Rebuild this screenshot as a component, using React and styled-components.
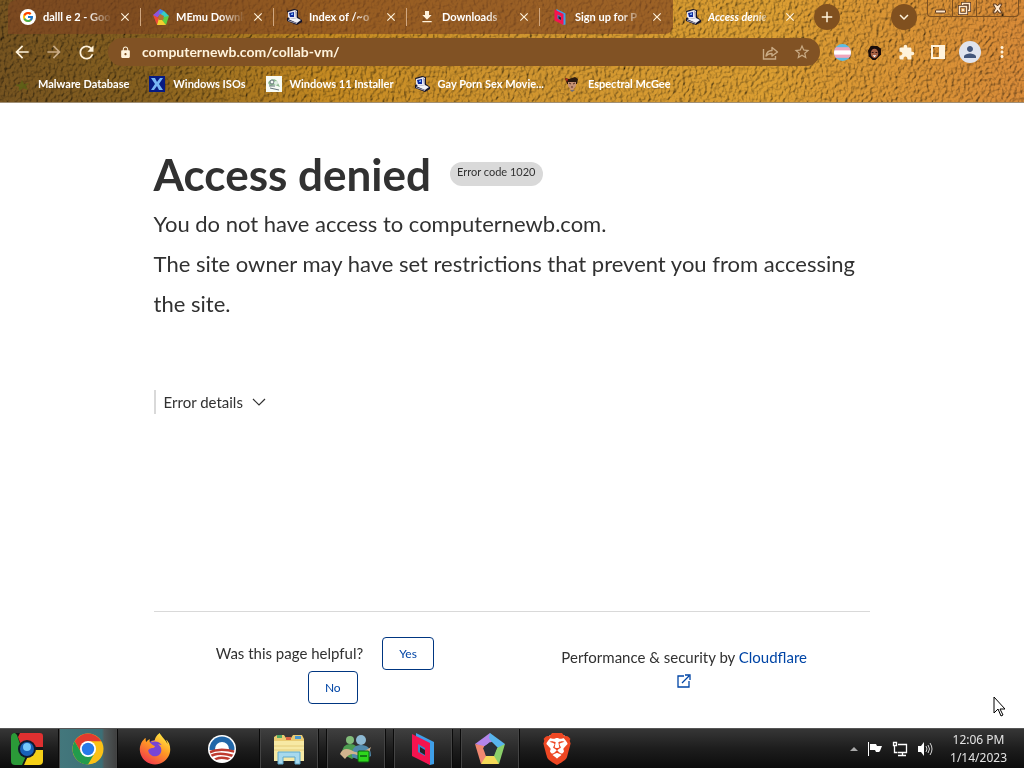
import React from "react";
import styled, { createGlobalStyle, css } from "styled-components";
import {
  MdAdd,
  MdArrowBack,
  MdArrowForward,
  MdClose,
  MdExpandMore,
  MdExtension,
  MdFileDownload,
  MdLock,
  MdMoreVert,
  MdPerson,
  MdRefresh,
  MdStarBorder,
} from "react-icons/md";
import { FcGoogle } from "react-icons/fc";
import { FaFirefoxBrowser } from "react-icons/fa";
import { SiBrave } from "react-icons/si";

const GlobalStyle = createGlobalStyle`
  * {
    box-sizing: border-box;
  }

  body {
    margin: 0;
    background: #ffffff;
    font-family: Lato, "Open Sans", sans-serif;
  }

  button, input {
    font-family: inherit;
  }

  svg {
    display: block;
    flex-shrink: 0;
  }
`;

const cream = "#fff3dc";

const Screen = styled.div`
  display: flex;
  flex-direction: column;
  min-height: 100vh;
`;

/* ---------- browser frame ---------- */

const Header = styled.header`
  position: relative;
  overflow: hidden;
  color: #ffffff;
  border-bottom: 1px solid #a09078;
`;

const Texture = styled.svg`
  position: absolute;
  inset: 0;
  width: 100%;
  height: 100%;
`;

const Chrome = styled.div`
  position: relative;
`;

const TabStrip = styled.div`
  display: flex;
  align-items: flex-start;
  height: 38px;
  padding: 0 5px 0 8px;
`;

const Tabs = styled.nav`
  display: flex;
  flex: 0 1 798px;
  min-width: 0;
`;

const Tab = styled.div`
  display: flex;
  flex: 1 1 0;
  align-items: center;
  min-width: 0;
  height: 34px;
  padding: 0 8px 0 12px;
  background: ${(props) => (props.$active ? "none" : "rgba(126, 68, 34, 0.66)")};
  border-radius: ${(props) => (props.$last ? "0 0 8px 0" : "0")};

  &:first-child {
    border-radius: 8px 0 0 0;
  }
`;

const TabTitle = styled.button`
  flex: 1;
  min-width: 0;
  margin: 0 5px 0 7px;
  padding: 0;
  overflow: hidden;
  border: none;
  background: none;
  color: #ffffff;
  font-size: 11px;
  font-weight: 700;
  font-style: ${(props) => (props.$active ? "italic" : "normal")};
  line-height: 16px;
  text-align: left;
  white-space: nowrap;
  mask-image: linear-gradient(to right, #000 64%, transparent);
`;

const IconButton = styled.button`
  display: flex;
  align-items: center;
  justify-content: center;
  flex-shrink: 0;
  width: ${(props) => props.$size || 28}px;
  height: ${(props) => props.$size || 28}px;
  padding: 0;
  border: none;
  border-radius: 50%;
  background: none;
  color: ${(props) => (props.$dim ? "#c9ab85" : cream)};
`;

const TabClose = styled(IconButton)`
  position: relative;

  ${(props) =>
    props.$divider &&
    css`
      &::after {
        content: "";
        position: absolute;
        left: 23px;
        width: 1px;
        height: 18px;
        background: #d0a780;
      }
    `}
`;

const RoundButton = styled(IconButton)`
  margin: 4px 0 0 8px;
  background: #80501f;
`;

const Spacer = styled.div`
  flex: 1;
`;

const WindowControls = styled.div`
  display: flex;
  height: 17px;
  margin-left: 10px;
  border: 1px solid #7d5020;
  border-top: none;
  border-radius: 0 0 4px 4px;
`;

const WindowButton = styled.button`
  display: flex;
  align-items: center;
  justify-content: center;
  width: ${(props) => (props.$wide ? 42 : 24)}px;
  padding: 0;
  border: none;
  border-left: ${(props) => (props.$first ? "none" : "1px solid #7d5020")};
  background: none;
`;

const Toolbar = styled.div`
  display: flex;
  align-items: center;
  gap: 8px;
  height: 28px;
  padding: 0 8px;
`;

const ButtonGroup = styled.div`
  display: flex;
  gap: 4px;
`;

const AddressBar = styled.label`
  display: flex;
  flex: 1;
  align-items: center;
  gap: 4px;
  height: 28px;
  min-width: 0;
  padding: 0 4px 0 11px;
  border-radius: 14px;
  background: #815224;
  color: ${cream};
`;

const AddressInput = styled.input`
  flex: 1;
  min-width: 0;
  margin-left: 6px;
  padding: 0;
  border: none;
  outline: none;
  background: none;
  color: ${cream};
  font-size: 14px;
  font-weight: 700;
  line-height: 20px;
`;

const Avatar = styled.span`
  display: flex;
  align-items: center;
  justify-content: center;
  width: 22px;
  height: 22px;
  border-radius: 50%;
  background: #e0e4ee;
  color: #44577c;
`;

const Disc = styled.span`
  display: flex;
  flex-shrink: 0;
  padding: 2px;
  border-radius: 50%;
  background: #ffffff;
`;

const Bookmarks = styled.nav`
  display: flex;
  align-items: center;
  gap: 20px;
  height: 36px;
  padding: 0 14px;
`;

const Bookmark = styled.a`
  display: flex;
  align-items: center;
  gap: 8px;
  color: #ffffff;
  font-size: 11px;
  font-weight: 700;
  line-height: 16px;
  white-space: nowrap;
  text-decoration: none;
`;

/* ---------- page ---------- */

const Page = styled.main`
  position: relative;
  display: flex;
  flex: 1;
  flex-direction: column;
  color: #313131;
`;

const Content = styled.section`
  width: 70%;
  margin: 0 auto;
  padding-top: 45px;
`;

const Heading = styled.div`
  display: flex;
  align-items: center;
  gap: 19px;
  height: 52px;
`;

const Title = styled.h1`
  margin: 0;
  font-size: 44px;
  font-weight: 700;
  line-height: 52px;
  white-space: nowrap;
`;

const ErrorCode = styled.span`
  height: 24px;
  padding: 0 7px;
  border-radius: 12px;
  background: #d9d9d9;
  font-size: 11px;
  line-height: 20px;
  white-space: nowrap;
`;

const Message = styled.p`
  margin: 0;
  font-size: 22px;
  line-height: 40px;
`;

const Messages = styled.div`
  padding-top: 4px;
`;

const Details = styled.button`
  display: flex;
  align-items: center;
  gap: 9px;
  height: 24px;
  margin-top: 66px;
  padding: 0 0 0 8px;
  border: none;
  border-left: 2px solid #d9d9d9;
  background: none;
  color: #313131;
  font-size: 15px;
`;

const Footer = styled.footer`
  display: grid;
  grid-template-columns: 1fr 1fr;
  width: 70%;
  margin: auto auto 0;
  padding: 25px 0 24px;
  border-top: 1px solid #d9d9d9;
  font-size: 15px;
  line-height: 23px;
`;

const Feedback = styled.div`
  display: flex;
  flex-wrap: wrap;
  align-items: center;
  justify-content: center;
  gap: 1px 3px;
  padding: 0 50px;
`;

const Choice = styled.button`
  height: 33px;
  margin: 0 16px;
  padding: 0 16px;
  border: 1px solid #003681;
  border-radius: 4px;
  background: #ffffff;
  color: #0045a6;
  font-size: 12px;
`;

const Security = styled.div`
  display: flex;
  flex-direction: column;
  align-items: center;
  padding: 9px 14px 0 0;
`;

const CloudLink = styled.a`
  color: #0045a6;
  text-decoration: none;
`;

const LinkIcon = styled(CloudLink)`
  padding-top: 5px;
`;

const Cursor = styled.svg`
  position: absolute;
  right: 19px;
  bottom: 11px;
`;

/* ---------- taskbar ---------- */

const Taskbar = styled.footer`
  display: flex;
  align-items: stretch;
  height: 40px;
  border-top: 1px solid #555555;
  background: linear-gradient(#363636, #1d1d1d 50%, #0c0c0c);
  color: #ffffff;
`;

const TaskButtons = styled.div`
  display: flex;
  gap: 7px;
  padding-left: 4px;
`;

const StartButton = styled.button`
  width: 54px;
  padding: 0 0 0 10px;
  border: none;
  background: none;
`;

const TaskButton = styled.button`
  display: flex;
  align-items: center;
  justify-content: center;
  width: 60px;
  padding: 0;
  border: 1px solid transparent;
  border-width: 0 1px;
  background: none;

  ${(props) =>
    props.$open &&
    css`
      border-color: #0a0a0a;
      background: linear-gradient(#3f3f3f, #2b2b2b 50%, #191919);
      box-shadow: inset 1px 0 #444444, inset -1px 0 #444444;
    `}

  ${(props) =>
    props.$active &&
    css`
      background: linear-gradient(to right, #43777c, #3c6f76 74%, #515a5b 78%, #3f3f3f);
    `}
`;

const Tray = styled.div`
  display: flex;
  align-items: center;
  gap: 9px;
  margin-left: auto;
  padding-right: 17px;
`;

const Clock = styled.time`
  margin-left: 8px;
  font-family: "Noto Sans", sans-serif;
  font-size: 12px;
  line-height: 18px;
  text-align: center;
  color: #e4e4e4;
`;

/* ---------- drawings ---------- */

const Leather = () => (
  <Texture aria-hidden="true" preserveAspectRatio="none">
    <defs>
      <linearGradient id="hide">
        <stop offset="0" stopColor="#765420" />
        <stop offset="0.14" stopColor="#86601f" />
        <stop offset="0.32" stopColor="#c68b22" />
        <stop offset="0.5" stopColor="#d0952f" />
        <stop offset="0.75" stopColor="#dc9f32" />
        <stop offset="1" stopColor="#d98b38" />
      </linearGradient>
      <filter id="grain" x="0" y="0" width="100%" height="100%">
        <feTurbulence type="fractalNoise" baseFrequency="0.32 0.26" numOctaves="3" seed="8" />
        <feDiffuseLighting surfaceScale="3" diffuseConstant="1.1" lightingColor="#ffffff">
          <feDistantLight azimuth="215" elevation="55" />
        </feDiffuseLighting>
      </filter>
    </defs>
    <rect width="100%" height="100%" fill="url(#hide)" />
    <rect width="100%" height="100%" filter="url(#grain)" style={{ mixBlendMode: "multiply" }} opacity="0.8" />
  </Texture>
);

const Computer = () => (
  <svg width="16" height="16" viewBox="0 0 16 16">
    <path d="M1 2 8 0l4 1v7l4 3v2l-5 3-10-4v-3l2-1z" fill="#15152a" />
    <path d="m2 3 7-2 2 1v7l-7 1-2-2z" fill="#e8e8f2" />
    <path d="m3 4 5-1v5L4 8z" fill="#102b9c" />
    <path d="m5 5 2-1v2L5 6z" fill="#79b5f4" />
    <path d="m9 2 2 1v5l-1 1z" fill="#9b9bb4" />
    <path d="m2 10 9-1 4 2-4 3z" fill="#f2f2f8" />
    <path d="m2 11 9 3v1l-9-3z" fill="#a7a7bd" />
  </svg>
);

const Pentagon = ({ size = 16 }) => (
  <svg width={size} height={size} viewBox="0 0 32 32">
    <path d="M16 0 1 11l8 3 10-6z" fill="#b385ea" />
    <path d="m16 0 15 11-5 6-9-9-2-3z" fill="#58b5ed" />
    <path d="m31 11-6 20-7-6 5-10z" fill="#8bd06a" />
    <path d="M25 31H7l2-8h11z" fill="#f4d958" />
    <path d="M1 11 7 31l5-8-2-10z" fill="#f08770" />
    <path d="m16 9 7 6-3 8h-8l-3-8z" fill="#29303a" />
  </svg>
);

const RainbowPentagon = () => (
  <svg width="16" height="16" viewBox="0 0 16 16">
    <path d="M7 0 0 6l4 3 4-4z" fill="#8d55dc" />
    <path d="m7 0 4 2-1 5-4-2z" fill="#3f8df0" />
    <path d="m11 2 5 5-5 3-3-5z" fill="#36cfc4" />
    <path d="m16 7-3 9-4-4 2-4z" fill="#61cf41" />
    <path d="M13 16H4V9l5 2z" fill="#f3cf30" />
    <path d="m0 6 4 10 2-7z" fill="#ee4937" />
    <path d="m7 5 4 2-1 4H6L5 8z" fill="#b37532" />
  </svg>
);

const Parsec = ({ size = 16 }) => (
  <svg width={size} height={size} viewBox="0 0 32 32">
    <path d="m9 0 18 9v22l-4 1L9 23z" fill="#3f9fe8" />
    <path d="m5 1 18 9v22L5 23z" fill="#f5134f" />
    <path d="m11 11 7 4v8l-7-4z" fill="#3b86cf" />
    <path d="m13 14 5 3v5l-5-3z" fill="#252529" />
  </svg>
);

const Alien = () => (
  <svg width="16" height="16" viewBox="0 0 16 16">
    <path d="m8 4 2 4 5-1-3 3 2 4-5-2-4 3v-4L1 9l5-1z" fill="#596315" opacity=".75" />
  </svg>
);

const XBadge = () => (
  <svg width="16" height="16" viewBox="0 0 16 16">
    <rect width="16" height="16" fill="#061a83" />
    <path d="M2 2h4l2 4 3-4h3l-4 6 4 6h-4l-2-4-3 4H2l4-6z" fill="#76b4f4" />
  </svg>
);

const Installer = () => (
  <svg width="16" height="16" viewBox="0 0 16 16">
    <rect width="16" height="16" fill="#f7fbf5" />
    <path d="M2 7c1-4 7-5 9-2l3 6-5-2-5 1z" fill="#8dbb90" />
    <circle cx="6" cy="6" r="2" fill="#f4faf4" stroke="#67757c" />
    <circle cx="10" cy="7" r="2" fill="#e1efe4" />
    <path d="M3 10h6M4 12l9 2" stroke="#67757c" />
  </svg>
);

const Face = () => (
  <svg width="16" height="16" viewBox="0 0 16 16">
    <path d="m1 2 4 1 6-2 3 2-1 5H3z" fill="#29180f" />
    <path d="M4 6h8v4l-3 4H7l-3-4z" fill="#c69173" />
    <path d="m5 7 2 1m2 0 2-1m-4 4h2" stroke="#562d20" />
    <path d="m1 2 3 1-1 3z" fill="#b62b20" />
    <path d="m6 14 2 2 3-2z" fill="#6e6d79" />
  </svg>
);

const Portrait = () => (
  <svg width="15" height="15" viewBox="0 0 16 16">
    <path d="M4 1h7l4 3v6l-4 4-2 2H6l-4-4-1-6z" fill="#180c0b" />
    <ellipse cx="8" cy="9" rx="4" ry="5" fill="#a96244" />
    <path d="M5 8h2m2 0h2" stroke="#2a1210" />
    <path d="M6 11h4l-2 2z" fill="#fff" />
  </svg>
);

const Stripes = () => (
  <svg width="17" height="17" viewBox="0 0 16 16">
    <clipPath id="flagRound">
      <circle cx="8" cy="8" r="8" />
    </clipPath>
    <g clipPath="url(#flagRound)">
      <rect width="16" height="16" fill="#5dbbe3" />
      <rect y="3" width="16" height="10" fill="#efa5bb" />
      <rect y="6" width="16" height="4" fill="#fff" />
    </g>
  </svg>
);

const ShareIcon = () => (
  <svg width="17" height="17" viewBox="0 0 17 17" fill="none" stroke="currentColor" strokeWidth="1.4">
    <path d="M1.5 5v10h12v-3" />
    <path d="M4 12c.6-4 2.8-5.5 6-5.5V3.5L15.5 8 10 12V9.500c-3 0-4.600.8-6 2.500z" strokeLinejoin="round" />
  </svg>
);

const SidePanel = () => (
  <svg width="14" height="14" viewBox="0 0 14 14">
    <path d="M0 0h14v14H0zm2 2v10h6V2z" fill={cream} fillRule="evenodd" />
  </svg>
);

const MinimizeIcon = () => (
  <svg width="11" height="11" viewBox="0 0 11 11">
    <rect x=".5" y="7" width="10" height="3" rx="1" fill="#ffe7ca" stroke="#59351b" />
  </svg>
);

const RestoreIcon = () => (
  <svg width="13" height="13" viewBox="0 0 13 13" fill="none">
    <path d="M4.500 3V1.500h7v7H10M1.500 4.500h7v7h-7z" stroke="#59351b" strokeWidth="3" />
    <path d="M4.500 3V1.500h7v7H10M1.500 4.500h7v7h-7zM4.500 7.500h1v1h-1z" stroke="#ffe7ca" strokeWidth="1.500" />
  </svg>
);

const CloseIcon = () => (
  <svg width="11" height="11" viewBox="0 0 11 11">
    <path d="M1 1h3l1.500 2L7 1h3L7.500 5.500 10 10H7L5.500 7.500 4 10H1l2.500-4.500z" fill="#ffe7ca" stroke="#59351b" />
  </svg>
);

const OldChrome = () => (
  <svg width="34" height="34" viewBox="0 0 34 34">
    <rect x="1" y="1" width="32" height="32" rx="4" fill="#151515" />
    <path d="M10 1h20q3 0 3 3v11H22q-4-5-11-2L8 5z" fill="#df3030" />
    <path d="M5 1Q1 1 1 5v24q0 4 4 4h7l4-9q-7-2-5-9L7 3z" fill="#2b9a38" />
    <path d="M33 18v11q0 4-4 4H14l4-9q5-1 6-6z" fill="#f5d018" />
    <circle cx="17" cy="17" r="9" fill="#101a2e" />
    <circle cx="17" cy="17" r="7" fill="#1862b8" />
    <circle cx="17" cy="15" r="4" fill="#75c8fa" />
  </svg>
);

const NewChrome = () => (
  <svg width="32" height="32" viewBox="0 0 32 32">
    <circle cx="16" cy="16" r="15.500" fill="#fbc116" />
    <path d="M2.600 8.300A15.500 15.500 0 0 1 29.400 8.300H16L9.300 19.800z" fill="#e33b2e" />
    <path d="M2.600 8.300A15.500 15.500 0 0 0 16 31.500l6.700-11.600L9.300 19.800z" fill="#229b4c" />
    <circle cx="16" cy="16" r="8" fill="#fff" />
    <circle cx="16" cy="16" r="6.200" fill="#2779e8" />
  </svg>
);

const Firefox = () => (
  <svg width="32" height="32" viewBox="0 0 32 32">
    <defs>
      <linearGradient id="flame" x1="0.8" y1="0" x2="0.2" y2="1">
        <stop offset="0" stopColor="#fff047" />
        <stop offset="0.45" stopColor="#ff9a24" />
        <stop offset="1" stopColor="#f0314e" />
      </linearGradient>
    </defs>
    <circle cx="16" cy="16" r="9" fill="#7845d5" />
    <FaFirefoxBrowser x="0" y="0" size={32} fill="url(#flame)" />
  </svg>
);

const Sunrise = () => (
  <svg width="28" height="28" viewBox="0 0 28 28">
    <clipPath id="sunRound">
      <circle cx="14" cy="14" r="12.500" />
    </clipPath>
    <circle cx="14" cy="14" r="14" fill="#fff" />
    <g clipPath="url(#sunRound)">
      <rect width="28" height="15" fill="#2167a8" />
      <circle cx="14" cy="14" r="7" fill="#fff" />
      <rect y="15" width="28" height="13" fill="#fff" />
      <path d="M0 18q11-6 28-1M0 23q9-8 28-1M4 27q7-8 22-1" fill="none" stroke="#be3c31" strokeWidth="2.500" />
    </g>
  </svg>
);

const Explorer = () => (
  <svg width="34" height="32" viewBox="0 0 34 32">
    <path d="M2 4 5 2h7l2 3h5l2-3h9l2 4v22H2z" fill="#eacb72" />
    <path d="M5 2h5v3H5z" fill="#52a862" />
    <path d="M14 4h5v3h-5z" fill="#dc6444" />
    <path d="M23 3h6v3h-6z" fill="#4b99cf" />
    <path d="M2 8h30v20H2z" fill="#f7e9a4" />
    <path d="M2 13h30M2 17h30" stroke="#e4cc78" />
    <path d="M6 31V19h22v12h-5v-7H11v7z" fill="#a7d9ed" stroke="#5ea9cc" />
  </svg>
);

const People = () => (
  <svg width="34" height="30" viewBox="0 0 34 30">
    <circle cx="11" cy="6" r="4" fill="#82bd7a" />
    <path d="M3 20q0-10 8-10t9 9l-7 6z" fill="#4c9d50" />
    <circle cx="22" cy="6" r="5" fill="#8db9d3" />
    <path d="M13 23q-1-12 9-12t10 11l-9 5z" fill="#518aac" />
    <path d="M1 20q3-7 11-4 8 6 20-3-3 12-14 8-7-3-12 4z" fill="#d1b48e" />
    <rect x="19" y="17" width="11" height="11" rx="1" fill="#2ed61d" stroke="#0b630f" />
    <path d="M21 22h7" stroke="#137a13" strokeWidth="2" />
  </svg>
);

const Brave = () => (
  <svg width="28" height="32" viewBox="0 0 28 32">
    <path d="m7 2 14 0 5 6-3 15-9 8-9-8L2 8z" fill="#fff" />
    <SiBrave x="-2" y="0" size={32} fill="#ee4723" />
  </svg>
);

const ChevronDown = () => (
  <svg width="14" height="8" viewBox="0 0 14 8" fill="none" stroke="#313131">
    <path d="m1 1 6 6 6-6" strokeWidth="1.200" />
  </svg>
);

const External = () => (
  <svg width="14" height="14" viewBox="0 0 14 14" fill="none" stroke="#0045a6" strokeWidth="1.300">
    <path d="M7 2H1v11h11V7M5 9l7-7M8 1h5v5" />
  </svg>
);

const TrayArrow = () => (
  <svg width="8" height="5" viewBox="0 0 8 5">
    <path d="m0 5 4-4 4 4z" fill="#a9a9a9" />
  </svg>
);

const TrayFlag = () => (
  <svg width="16" height="16" viewBox="0 0 16 16">
    <path d="M1 1h1v14H1zM3 3h6l1 2h5l-2 5-1 1H9L8 9H3z" fill="#fff" />
  </svg>
);

const TrayNetwork = () => (
  <svg width="16" height="16" viewBox="0 0 16 16" fill="none" stroke="#fff">
    <path d="M6 3.500h8.500v8h-9M10.500 12v2M6 14.500h8M2.500 5v6.500H5M1.500 1.500h3v3h-3z" strokeWidth="1.300" />
  </svg>
);

const TraySpeaker = () => (
  <svg width="16" height="16" viewBox="0 0 16 16">
    <path d="M1 5h3l3-4v14l-3-4H1z" fill="#fff" />
    <path d="M9 5q2 3 0 6M11 4q3 4 0 8M13 2q4 6 0 12" fill="none" stroke="#d5d5d5" />
  </svg>
);

const GoogleBadge = () => (
  <Disc>
    <FcGoogle size={12} />
  </Disc>
);

const tabs = [
  { title: "dalll e 2 - Goo", icon: <GoogleBadge /> },
  { title: "MEmu Downlo", icon: <RainbowPentagon /> },
  { title: "Index of /~o", icon: <Computer /> },
  { title: "Downloads", icon: <MdFileDownload size={16} color={cream} /> },
  { title: "Sign up for P", icon: <Parsec /> },
  { title: "Access denie", icon: <Computer />, active: true },
];

const bookmarks = [
  { title: "Malware Database", icon: <Alien /> },
  { title: "Windows ISOs", icon: <XBadge /> },
  { title: "Windows 11 Installer", icon: <Installer /> },
  { title: "Gay Porn Sex Movie...", icon: <Computer /> },
  { title: "Espectral McGee", icon: <Face /> },
];

const tasks = [
  { name: "Chrome", icon: <NewChrome />, open: true, active: true },
  { name: "Firefox", icon: <Firefox /> },
  { name: "Sunrise", icon: <Sunrise /> },
  { name: "Explorer", icon: <Explorer />, open: true },
  { name: "Messenger", icon: <People />, open: true },
  { name: "Parsec", icon: <Parsec size={32} />, open: true },
  { name: "MEmu", icon: <Pentagon size={32} />, open: true },
  { name: "Brave", icon: <Brave /> },
];

const BrowserHeader = () => (
  <Header>
    <Leather />
    <Chrome>
      <TabStrip>
        <Tabs>
          {tabs.map((tab, i) => (
            <Tab key={tab.title} $active={tab.active} $last={i === tabs.length - 2}>
              {tab.icon}
              <TabTitle $active={tab.active}>{tab.title}</TabTitle>
              <TabClose $size={16} $divider={i < tabs.length - 2} aria-label="Close tab">
                <MdClose size={14} stroke="currentColor" />
              </TabClose>
            </Tab>
          ))}
        </Tabs>
        <RoundButton $size={26} aria-label="New tab">
          <MdAdd size={18} />
        </RoundButton>
        <Spacer />
        <RoundButton $size={26} aria-label="Search tabs">
          <MdExpandMore size={18} />
        </RoundButton>
        <WindowControls>
          <WindowButton $first aria-label="Minimize">
            <MinimizeIcon />
          </WindowButton>
          <WindowButton aria-label="Restore">
            <RestoreIcon />
          </WindowButton>
          <WindowButton $wide aria-label="Close">
            <CloseIcon />
          </WindowButton>
        </WindowControls>
      </TabStrip>

      <Toolbar>
        <ButtonGroup>
          <IconButton aria-label="Back">
            <MdArrowBack size={20} />
          </IconButton>
          <IconButton $dim aria-label="Forward">
            <MdArrowForward size={20} />
          </IconButton>
          <IconButton aria-label="Reload">
            <MdRefresh size={21} />
          </IconButton>
        </ButtonGroup>
        <AddressBar>
          <MdLock size={13} />
          <AddressInput type="text" aria-label="Address" defaultValue="computernewb.com/collab-vm/" />
          <IconButton $dim aria-label="Share">
            <ShareIcon />
          </IconButton>
          <IconButton $dim aria-label="Bookmark">
            <MdStarBorder size={18} />
          </IconButton>
        </AddressBar>
        <ButtonGroup>
          <IconButton aria-label="Flag extension">
            <Stripes />
          </IconButton>
          <IconButton aria-label="Portrait extension">
            <Portrait />
          </IconButton>
          <IconButton aria-label="Extensions">
            <MdExtension size={17} />
          </IconButton>
          <IconButton aria-label="Side panel">
            <SidePanel />
          </IconButton>
          <IconButton aria-label="Profile">
            <Avatar>
              <MdPerson size={18} />
            </Avatar>
          </IconButton>
          <IconButton aria-label="Menu">
            <MdMoreVert size={18} />
          </IconButton>
        </ButtonGroup>
      </Toolbar>

      <Bookmarks>
        {bookmarks.map((mark) => (
          <Bookmark key={mark.title} href="#">
            {mark.icon}
            {mark.title}
          </Bookmark>
        ))}
      </Bookmarks>
    </Chrome>
  </Header>
);

const ErrorPage = () => (
  <Page>
    <Content>
      <Heading>
        <Title>Access denied</Title>
        <ErrorCode>Error code 1020</ErrorCode>
      </Heading>
      <Messages>
        <Message>You do not have access to computernewb.com.</Message>
        <Message>The site owner may have set restrictions that prevent you from accessing the site.</Message>
      </Messages>
      <Details>
        Error details
        <ChevronDown />
      </Details>
    </Content>
    <Footer>
      <Feedback>
        <span>Was this page helpful?</span>
        <Choice>Yes</Choice>
        <Choice>No</Choice>
      </Feedback>
      <Security>
        <span>
          Performance &amp; security by <CloudLink href="#">Cloudflare</CloudLink>
        </span>
        <LinkIcon href="#" aria-label="Open Cloudflare">
          <External />
        </LinkIcon>
      </Security>
    </Footer>
    <Cursor width="12" height="21" viewBox="0 0 12 21">
      <path d="M1 1v16l4-4 3 7 2-1-3-6h5z" fill="#fff" stroke="#000" />
    </Cursor>
  </Page>
);

const App = () => (
  <Screen>
    <GlobalStyle />
    <BrowserHeader />
    <ErrorPage />
    <Taskbar>
      <StartButton aria-label="Start">
        <OldChrome />
      </StartButton>
      <TaskButtons>
        {tasks.map((task) => (
          <TaskButton key={task.name} $open={task.open} $active={task.active} aria-label={task.name}>
            {task.icon}
          </TaskButton>
        ))}
      </TaskButtons>
      <Tray>
        <TrayArrow />
        <TrayFlag />
        <TrayNetwork />
        <TraySpeaker />
        <Clock>
          12:06 PM
          <br />
          1/14/2023
        </Clock>
      </Tray>
    </Taskbar>
  </Screen>
);

export default App;
